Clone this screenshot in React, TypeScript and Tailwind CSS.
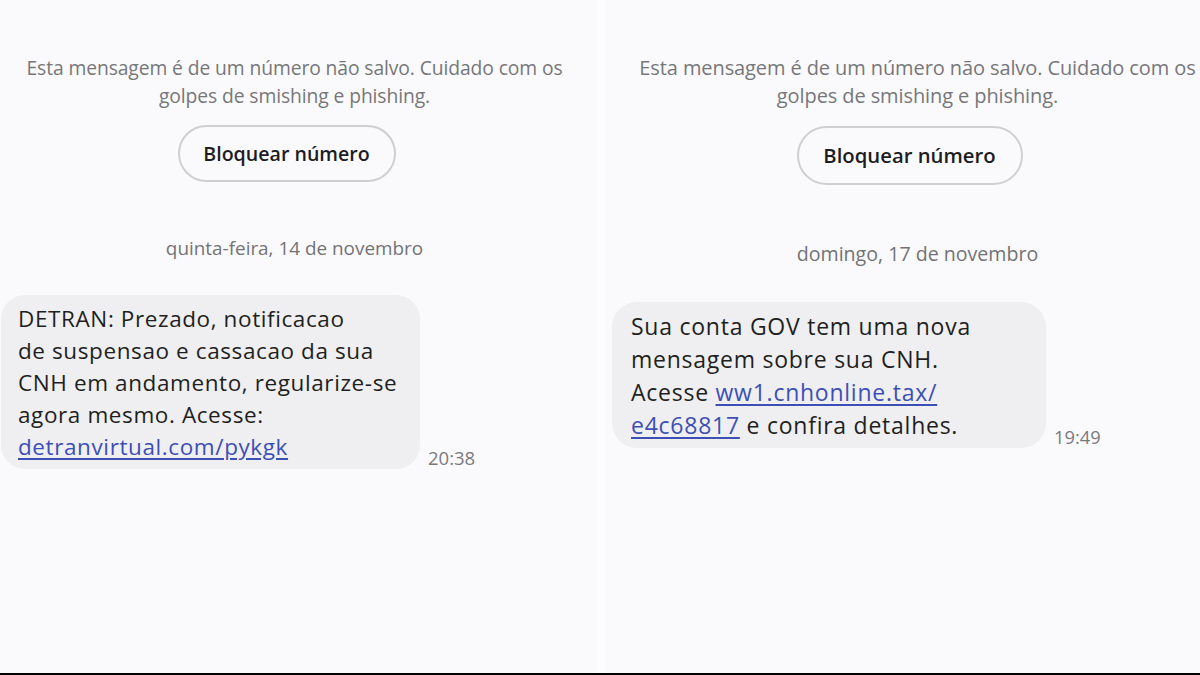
import React from "react";

const font = { fontFamily: "'Open Sans', Roboto, Arial, sans-serif" };

export default function App() {
  return (
    <div className="w-[1200px] h-[675px] bg-[#fafafc] overflow-hidden flex flex-col" style={font}>
      <div className="flex flex-1">
        {/* Left panel */}
        <div className="w-[597px] flex flex-col">
          <div className="flex flex-col items-center pt-[54px] pr-[8px]">
            <p className="text-[19.3px] leading-[28px] text-[#777779] text-center whitespace-nowrap tracking-[-0.1px]">
              Esta mensagem é de um número não salvo. Cuidado com os
              <br />
              golpes de smishing e phishing.
            </p>
            <div className="mt-[15px] w-[218px] h-[57px] rounded-full border-2 border-[#cfcfd1] flex items-center justify-center text-[19.6px] font-semibold text-[#1d1d1f] ml-[-16px]">
              Bloquear número
            </div>
            <p className="mt-[54px] text-[18.9px] leading-[24px] text-[#737375]">quinta-feira, 14 de novembro</p>
          </div>
          <div className="flex items-end mt-[35px]">
            <div className="ml-[1px] w-[419px] rounded-[24px] bg-[#efeff1] pl-[17px] pt-[8px] pb-[6px] text-[22.5px] tracking-[0.6px] leading-[32px] text-[#1f1f21] whitespace-nowrap">
              DETRAN: Prezado, notificacao
              <br />
              de suspensao e cassacao da sua
              <br />
              CNH em andamento, regularize-se
              <br />
              agora mesmo. Acesse:
              <br />
              <span className="text-[#3d4fb4] underline underline-offset-[3px] decoration-[1.5px]">detranvirtual.com/pykgk</span>
            </div>
            <span className="ml-[8px] mb-[-3px] text-[18.5px] text-[#7a7a7c]">20:38</span>
          </div>
        </div>
        {/* Divider */}
        <div className="w-[8px] bg-[#fdfdfe]" />
        {/* Right panel */}
        <div className="flex-1 flex flex-col">
          <div className="flex flex-col items-center pt-[54px] pl-[30px]">
            <p className="text-[20px] leading-[28px] text-[#777779] text-center whitespace-nowrap tracking-[-0.1px]">
              Esta mensagem é de um número não salvo. Cuidado com os
              <br />
              golpes de smishing e phishing.
            </p>
            <div className="mt-[16px] w-[226px] h-[59px] rounded-full border-2 border-[#cfcfd1] flex items-center justify-center text-[20.3px] font-semibold text-[#1d1d1f] mr-[16px]">
              Bloquear número
            </div>
            <p className="mt-[57px] text-[19.6px] leading-[24px] text-[#737375]">domingo, 17 de novembro</p>
          </div>
          <div className="flex items-end mt-[36px]">
            <div className="ml-[7px] w-[434px] rounded-[25px] bg-[#efeff1] pl-[19px] pt-[8px] pb-[6px] text-[23px] tracking-[0.75px] leading-[33px] text-[#1f1f21] whitespace-nowrap">
              Sua conta GOV tem uma nova
              <br />
              mensagem sobre sua CNH.
              <br />
              Acesse{" "}
              <span className="text-[#3d4fb4] underline underline-offset-[3px] decoration-[1.5px]">ww1.cnhonline.tax/</span>
              <br />
              <span className="text-[#3d4fb4] underline underline-offset-[3px] decoration-[1.5px]">e4c68817</span> e confira detalhes.
            </div>
            <span className="ml-[8px] mb-[-2px] text-[18.3px] text-[#7a7a7c]">19:49</span>
          </div>
        </div>
      </div>
      <div className="h-[2px] bg-black" />
    </div>
  );
}
